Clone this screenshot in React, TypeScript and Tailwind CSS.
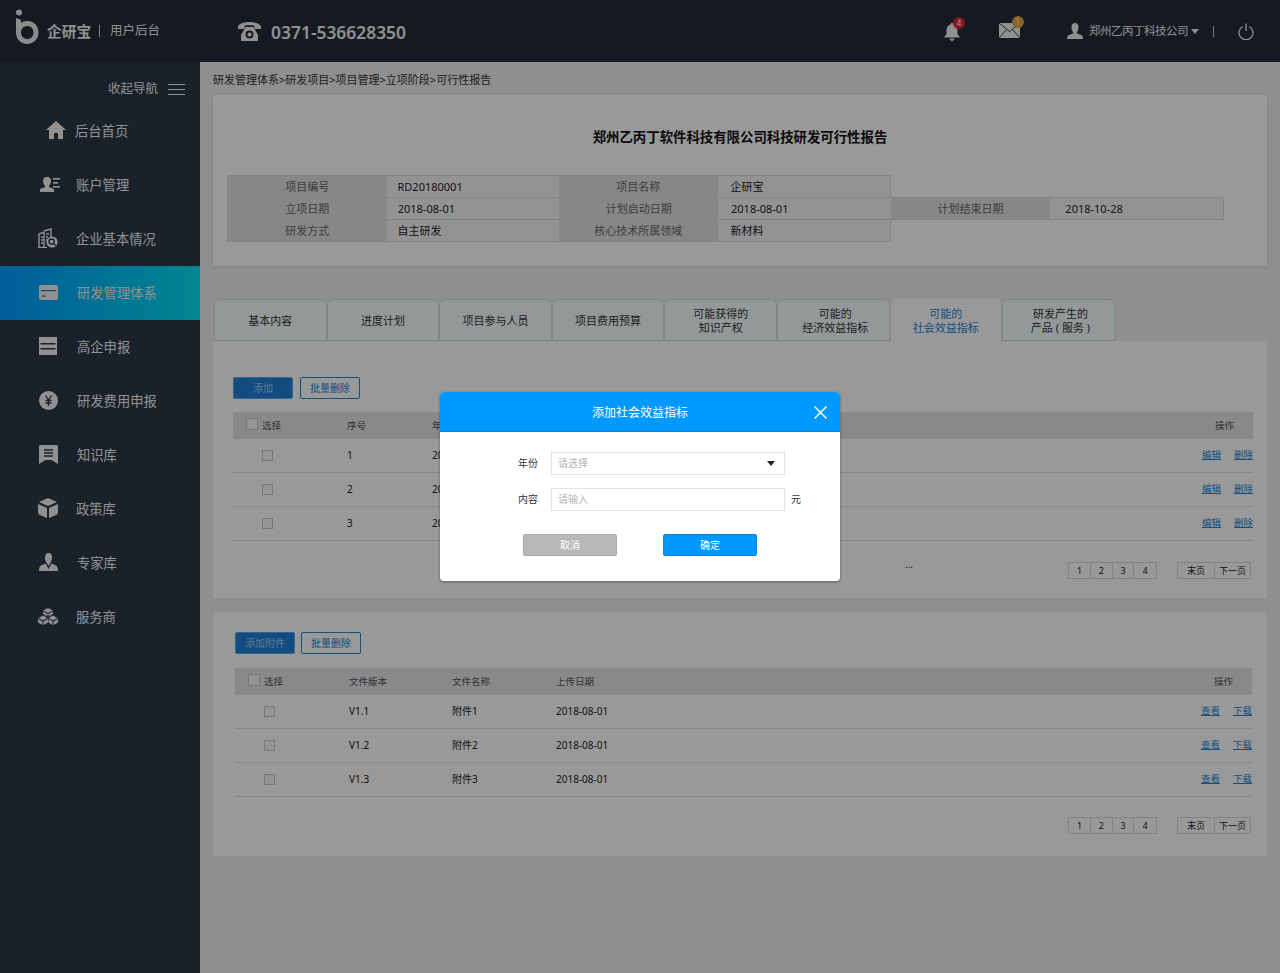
import { ReactNode } from "react";

const menu: { label: string; icon: ReactNode; active?: boolean; pad: string; gap: string }[] = [
  {
    label: "后台首页",
    pad: "pl-[46px]",
    gap: "ml-[9px]",
    icon: (
      <svg width="20" height="18" viewBox="0 0 20 18" fill="#f2f2f2">
        <path d="M10 0 L20 9 L17 9 L17 18 L12 18 L12 12 L8 12 L8 18 L3 18 L3 9 L0 9 Z" />
      </svg>
    ),
  },
  {
    label: "账户管理",
    pad: "pl-[40px]",
    gap: "ml-[16px]",
    icon: (
      <svg width="20" height="15" viewBox="0 0 20 15" fill="#f2f2f2">
        <path d="M7 0 C10 0 11 2 11 4 C11 6 10 8 9 9 L9 10 L14 12 L14 15 L0 15 L0 12 L5 10 L5 9 C4 8 3 6 3 4 C3 2 4 0 7 0 Z" />
        <rect x="13" y="1" width="7" height="1.6" />
        <rect x="13" y="5" width="5" height="1.6" />
        <rect x="13" y="9" width="7" height="1.6" />
      </svg>
    ),
  },
  {
    label: "企业基本情况",
    pad: "pl-[38px]",
    gap: "ml-[18px]",
    icon: (
      <svg width="20" height="20" viewBox="0 0 20 20" fill="none" stroke="#f2f2f2" strokeWidth="1.4">
        <path d="M1 19 L1 6 L6 4 L6 19 M6 3 L13 1 L13 9 M3 9 H5 M3 12 H5 M3 15 H5 M8 6 H11 M8 9 H10 M8 12 H9" />
        <path d="M0 19.5 H9" />
        <circle cx="14" cy="14" r="5.6" fill="#f2f2f2" stroke="none" />
        <circle cx="13.6" cy="13.6" r="2.6" stroke="#2b3849" />
        <path d="M15.6 15.6 L17.6 17.6" stroke="#2b3849" />
      </svg>
    ),
  },
  {
    label: "研发管理体系",
    active: true,
    pad: "pl-[38px]",
    gap: "ml-[19px]",
    icon: (
      <svg width="19" height="15" viewBox="0 0 19 15">
        <rect width="19" height="15" rx="2" fill="#f2f2f2" />
        <rect x="2" y="5" width="15" height="1.2" fill="#1478b8" />
        <rect x="2.500" y="10.500" width="4" height="1.2" fill="#1478b8" />
      </svg>
    ),
  },
  {
    label: "高企申报",
    pad: "pl-[38px]",
    gap: "ml-[19px]",
    icon: (
      <svg width="18" height="18" viewBox="0 0 18 18" fill="#f2f2f2">
        <path
          fillRule="evenodd"
          d="M0 0 H18 V18 H0 Z M1.500 6 V7.500 H16.500 V6 Z M1.500 11 V12.500 H16.500 V11 Z"
        />
      </svg>
    ),
  },
  {
    label: "研发费用申报",
    pad: "pl-[38px]",
    gap: "ml-[19px]",
    icon: (
      <svg width="19" height="19" viewBox="0 0 19 19">
        <circle cx="9.500" cy="9.500" r="9.500" fill="#f2f2f2" />
        <path d="M6.500 4.500 L9.500 9 L12.500 4.500 M9.500 9 V15 M6.500 9.500 H12.500 M6.500 12 H12.500" fill="none" stroke="#2b3849" strokeWidth="1.300" />
      </svg>
    ),
  },
  {
    label: "知识库",
    pad: "pl-[38px]",
    gap: "ml-[19px]",
    icon: (
      <svg width="19" height="19" viewBox="0 0 19 19">
        <path d="M1.500 0 H17.500 Q19 0 19 1.500 V19 L12.500 15 H6.500 L0 19 V1.500 Q0 0 1.500 0 Z" fill="#f2f2f2" />
        <path d="M5 5 H14 M5 8 H14 M5 11 H14" stroke="#2b3849" strokeWidth="1.300" />
      </svg>
    ),
  },
  {
    label: "政策库",
    pad: "pl-[38px]",
    gap: "ml-[18px]",
    icon: (
      <svg width="20" height="20" viewBox="0 0 20 20" fill="#f2f2f2">
        <path d="M10 0 L19 4 L10 8 L1 4 Z" />
        <path d="M0 6 L9 10 L9 20 L3 17.500 Q0 16.500 0 14 Z" />
        <path d="M20 6 L11 10 L11 20 L17 17.500 Q20 16.500 20 14 Z" />
      </svg>
    ),
  },
  {
    label: "专家库",
    pad: "pl-[38px]",
    gap: "ml-[19px]",
    icon: (
      <svg width="19" height="18" viewBox="0 0 19 18" fill="#f2f2f2">
        <path d="M9.500 0 C12 0 13 2 13 4.500 C13 7 12 9 11.500 10 L9.500 13 L7.500 10 C7 9 6 7 6 4.500 C6 2 7 0 9.500 0 Z" />
        <path d="M6.500 10.500 L9.500 16 L12.500 10.500 L17 12.500 Q19 13.500 19 18 H0 Q0 13.500 2 12.500 Z" />
      </svg>
    ),
  },
  {
    label: "服务商",
    pad: "pl-[38px]",
    gap: "ml-[18px]",
    icon: (
      <svg width="20" height="17" viewBox="0 0 20 17" fill="#f2f2f2">
        <path d="M10 0 L15 2.500 L10 5 L5 2.500 Z M5 3.500 L9.500 6 L9.500 8.500 L5 6 Z M15 3.500 L10.500 6 L10.500 8.500 L15 6 Z" />
        <path d="M5 7.500 L9.500 10 L5 12.500 L0.500 10 Z M0 11 L4.500 13.500 L4.500 17 L0 14.500 Z M10 11 L5.500 13.500 L5.500 17 L10 14.500 Z" />
        <path d="M15 7.500 L19.500 10 L15 12.500 L10.500 10 Z M10.500 11 L14.500 13.500 L14.500 17 L10.500 14.500 Z M20 11 L15.500 13.500 L15.500 17 L20 14.500 Z" />
      </svg>
    ),
  },
];

const tabs = [
  { lines: ["基本内容"], shift: "" },
  { lines: ["进度计划"], shift: "" },
  { lines: ["项目参与人员"], shift: "" },
  { lines: ["项目费用预算"], shift: "" },
  { lines: ["可能获得的", "知识产权"], shift: "" },
  { lines: ["可能的", "经济效益指标"], shift: "pl-[4px]" },
  { lines: ["可能的", "社会效益指标"], shift: "" },
  { lines: ["研发产生的", "产品 ( 服务 )"], shift: "pl-[4px]" },
];

function Checkbox({ size }: { size: string }) {
  return <span className={`block border border-[#c8c8c8] bg-[#f8f8f8] ${size}`} />;
}

function Pager() {
  return (
    <div className="flex justify-end pr-px text-[9px] leading-[15px] text-[#222]">
      <div className="flex border border-[#dadada] divide-x divide-[#dadada] bg-white">
        {["1", "2", "3", "4"].map((n) => (
          <span key={n} className="w-[21.7px] text-center">
            {n}
          </span>
        ))}
      </div>
      <div className="ml-5 flex border border-[#dadada] divide-x divide-[#dadada] bg-white">
        <span className="w-[37px] text-center">末页</span>
        <span className="w-[35px] text-center">下一页</span>
      </div>
    </div>
  );
}

function Toolbar({ add, gap }: { add: string; gap: string }) {
  return (
    <div className={`flex text-[10px] ${gap}`}>
      <button className="h-[22px] w-[60px] rounded-[2px] border border-[#5aa9e6] bg-[#1e7fd8] text-[#9fd0f5]">
        {add}
      </button>
      <button className="h-[22px] w-[60px] rounded-[2px] border border-[#2a86c8] bg-white text-[#1e86d8]">
        批量删除
      </button>
    </div>
  );
}

function DataTable({
  cols,
  head,
  rows,
  ops,
}: {
  cols: string;
  head: string[];
  rows: string[][];
  ops: [string, string];
}) {
  return (
    <div className="text-[10px]">
      <div className={`grid h-[27px] items-center bg-[#e4e4e4] pt-px text-[9.500px] text-[#555] ${cols}`}>
        <div className="flex items-center pl-[13px]">
          <Checkbox size="h-3 w-3 mb-[5px]" />
          <span className="ml-[4px]">选择</span>
        </div>
        {head.map((h) => (
          <span key={h}>{h}</span>
        ))}
        <span className="pr-[19px] text-right">操作</span>
      </div>
      {rows.map((r) => (
        <div key={r[0]} className={`grid h-[34px] items-center border-b border-[#e2e2e2] text-[#222] ${cols}`}>
          <div className="pl-[29px]">
            <Checkbox size="h-[11px] w-[11px] mb-px" />
          </div>
          {r.map((c, i) => (
            <span key={i}>{c}</span>
          ))}
          <div className="flex justify-end gap-[13px] text-[9.500px] text-[#1e86d8] underline">
            <span>{ops[0]}</span>
            <span>{ops[1]}</span>
          </div>
        </div>
      ))}
    </div>
  );
}

function InfoCell({
  label,
  value,
  wide,
  pad = "pl-3",
}: {
  label: string;
  value: string;
  wide?: boolean;
  pad?: string;
}) {
  return (
    <>
      <div className={`bg-[#e2e2e2] text-center text-[#666] ${wide ? "w-[160px]" : "w-[159px]"}`}>{label}</div>
      <div className={`w-[173px] bg-[#f6f6f6] text-[#222] ${pad}`}>{value}</div>
    </>
  );
}

export default function App() {
  return (
    <div
      className="relative h-[973px] w-[1280px] overflow-hidden"
      style={{ fontFamily: '"Noto Sans", "Noto Sans CJK SC", sans-serif' }}
    >
      <header className="flex h-[62px] items-center bg-[#232c3a] text-[#f0f0f0]">
        <svg width="24" height="36" viewBox="0 0 24 36" className="ml-[15px] mb-[9px]">
          <circle cx="4" cy="3.500" r="3" fill="#e8e8e8" />
          <path
            fillRule="evenodd"
            d="M1 9 L6 11 L6 14 C8 12.500 10 12 12.500 12 C19 12 23.500 17 23.500 23.500 C23.500 30 18.500 35 12 35 C5.500 35 1 30 1 23.500 Z M12.300 17 C8.700 17 6 19.800 6 23.500 C6 27.200 8.700 30 12.300 30 C15.900 30 18.500 27.200 18.500 23.500 C18.500 19.800 15.900 17 12.300 17 Z"
            fill="#e8e8e8"
          />
        </svg>
        <span className="ml-2 text-[14.700px] font-bold">企研宝</span>
        <span className="ml-2 h-3 w-px bg-[#ddd]" />
        <span className="ml-[10px] text-[12.500px]">用户后台</span>
        <svg width="23" height="19" viewBox="0 0 23 19" fill="#f0f0f0" className="ml-[78px]">
          <path d="M11.500 0 C17 0 21 1.500 23 4 L23 7 L17 7 L16 3.500 C13 3 10 3 7 3.500 L6 7 L0 7 L0 4 C2 1.500 6 0 11.500 0 Z" />
          <path
            fillRule="evenodd"
            d="M7.500 5 H15.500 L20 13 V19 H3 V13 Z M11.500 8.500 A4 4 0 1 0 11.500 16.500 A4 4 0 1 0 11.500 8.500 Z"
          />
          <circle cx="11.500" cy="12.500" r="2" />
        </svg>
        <span className="ml-[10px] pt-[2px] text-[17.400px] font-semibold">0371-536628350</span>

        <div className="relative ml-[538px] h-[17px] w-[16px]">
          <svg width="16" height="18" viewBox="0 0 16 18" fill="#f0f0f0">
            <path d="M8 0 C9 0 9.500 .6 9.500 1.500 C12 2.200 13.500 4.500 13.500 7.500 L13.500 11 L16 14.500 L0 14.500 L2.500 11 L2.500 7.500 C2.500 4.500 4 2.200 6.500 1.500 C6.500 .6 7 0 8 0 Z M5.500 15.500 H10.500 C10 17.300 9 18 8 18 C7 18 6 17.300 5.500 15.500 Z" />
          </svg>
          <span className="absolute left-[9px] top-[-6px] h-[12px] w-[12px] rounded-full bg-[#e0283c] text-center text-[8px] leading-[12px] text-white">
            4
          </span>
        </div>
        <div className="relative ml-[39px] h-[16px] w-[21px]">
          <svg width="21" height="15" viewBox="0 0 21 15" className="block">
            <rect width="21" height="15" fill="#f0f0f0" />
            <path d="M0 0 L10.500 8.500 L21 0 M0 15 L7.500 6.500 M21 15 L13.500 6.500" fill="none" stroke="#232c3a" strokeWidth="0.900" />
          </svg>
          <span className="absolute left-[13px] top-[-7px] h-[12px] w-[12px] rounded-full bg-[#e6a23c] text-center text-[8px] leading-[12px] text-white">
            1
          </span>
        </div>
        <svg width="16" height="16" viewBox="0 0 16 16" fill="#f0f0f0" className="ml-[47px]">
          <path d="M8 0 C10.500 0 11.500 2 11.500 4.500 C11.500 6.500 10.500 8.500 9.800 9.300 L9.800 10.300 L14.500 12.300 Q16 13 16 16 H0 Q0 13 1.500 12.300 L6.200 10.300 L6.200 9.300 C5.500 8.500 4.500 6.500 4.500 4.500 C4.500 2 5.500 0 8 0 Z" />
        </svg>
        <span className="ml-[6px] text-[11.500px] tracking-[-0.5px]">郑州乙丙丁科技公司</span>
        <span className="ml-[3px] h-0 w-0 border-x-[4.5px] border-t-[5px] border-x-transparent border-t-[#f0f0f0]" />
        <span className="ml-[14px] h-[11px] w-px bg-[#ccc]" />
        <svg width="16" height="17" viewBox="0 0 16 17" fill="none" stroke="#f0f0f0" strokeWidth="1.300" className="ml-[24px]">
          <path d="M4.800 3.500 A7 7 0 1 0 11.200 3.500 M8 .5 V8" />
        </svg>
      </header>

      <div className="flex h-[911px]">
        <aside className="w-[200px] shrink-0 bg-[#2b3849] text-[13.300px] text-[#f0f0f0]">
          <div className="flex h-[42px] items-center justify-end pr-[15px] pt-[12px] text-[12.500px]">
            <span>收起导航</span>
            <span className="relative ml-[10px] h-[11px] w-[17px] border-y border-[#f0f0f0]">
              <span className="absolute left-0 top-[4px] h-px w-full bg-[#f0f0f0]" />
            </span>
          </div>
          {menu.map((m) => (
            <div
              key={m.label}
              className={`flex h-[54px] items-center pb-[2px] ${m.pad} ${m.active ? "bg-gradient-to-r from-[#0a9aff] to-[#0ae0f0]" : ""}`}
            >
              <span className="flex w-5 justify-center">{m.icon}</span>
              <span className={`pt-[4px] ${m.gap}`}>{m.label}</span>
            </div>
          ))}
        </aside>

        <main className="min-w-0 flex-1 bg-[#eeeeee] pl-[13px] pr-[13px]">
          <div className="flex h-[33px] items-center pt-[3px] text-[11px] text-[#333]">
            研发管理体系&gt;研发项目&gt;项目管理&gt;立项阶段&gt;可行性报告
          </div>

          <section className="h-[171px] bg-white pl-[14px] shadow-[0_1px_3px_rgba(0,0,0,0.08)]">
            <h1 className="pt-[32px] pr-[14px] text-center text-[13.400px] font-bold leading-[21px] text-[#111]">
              郑州乙丙丁软件科技有限公司科技研发可行性报告
            </h1>
            <div className="mt-[27px] w-[997px] text-[11px] leading-[21px]">
              <div className="flex w-[664px] border border-b-0 border-[#dcdcdc]">
                <InfoCell label="项目编号" value="RD20180001" pad="pl-[11px]" />
                <InfoCell label="项目名称" value="企研宝" pad="pl-[13px]" />
              </div>
              <div className="flex w-[997px] border border-[#dcdcdc]">
                <InfoCell label="立项日期" value="2018-08-01" pad="pl-[11px]" />
                <InfoCell label="计划启动日期" value="2018-08-01" pad="pl-[13px]" />
                <InfoCell label="计划结束日期" value="2018-10-28" wide pad="pl-[15px]" />
              </div>
              <div className="flex w-[664px] border border-t-0 border-[#dcdcdc]">
                <InfoCell label="研发方式" value="自主研发" pad="pl-[11px]" />
                <InfoCell label="核心技术所属领域" value="新材料" pad="pl-[13px]" />
              </div>
            </div>
          </section>

          <div className="mt-[31px] flex h-[44px] items-end pl-px text-[11px] leading-[14px]">
            {tabs.map((t, i) => (
              <div
                key={i}
                className={`flex w-[112.600px] flex-col items-center justify-center rounded-t-[6px] border pt-[2px] ${t.shift} ${
                  i === 6
                    ? "h-[44px] border-b-0 border-[#e4e4e4] bg-white text-[#1e86d8]"
                    : "h-[42px] border-[#d4e2e2] border-b-[#c4d8d8] bg-[#f6ffff] text-[#333]"
                }`}
              >
                {t.lines.map((line) => (
                  <span key={line}>{line}</span>
                ))}
              </div>
            ))}
          </div>

          <section className="h-[257px] bg-white pl-5 pr-[14px] pt-9">
            <Toolbar add="添加" gap="gap-[7px]" />
            <div className="mt-[13px]">
              <DataTable
                cols="grid-cols-[114px_85px_1fr_70px]"
                head={["序号", "年份"]}
                rows={[
                  ["1", "2018"],
                  ["2", "2018"],
                  ["3", "2018"],
                ]}
                ops={["编辑", "删除"]}
              />
            </div>
            <div className="relative mt-[21px] pr-px">
              <span className="absolute left-[672px] top-[-3px] text-[10px] leading-none text-[#333]">...</span>
              <Pager />
            </div>
          </section>

          <section className="mt-[14px] h-[244px] bg-white pl-[22px] pr-[15px] pt-5">
            <Toolbar add="添加附件" gap="gap-[6px]" />
            <div className="mt-[14px]">
              <DataTable
                cols="grid-cols-[114px_103px_104px_1fr_70px]"
                head={["文件版本", "文件名称", "上传日期"]}
                rows={[
                  ["V1.1", "附件1", "2018-08-01"],
                  ["V1.2", "附件2", "2018-08-01"],
                  ["V1.3", "附件3", "2018-08-01"],
                ]}
                ops={["查看", "下载"]}
              />
            </div>
            <div className="mt-[20px]">
              <Pager />
            </div>
          </section>
        </main>
      </div>

      {/* dim layer + dialog */}
      <div className="absolute inset-0 bg-black/40" />
      <div className="absolute left-[440px] top-[392px] h-[189px] w-[400px] overflow-hidden rounded-[4px] bg-white shadow-[0_1px_3px_rgba(0,0,0,0.4)]">
        <div className="relative flex h-[40px] items-center justify-center border-b border-[#0a84d6] bg-[#0099ff] pt-[3px] text-[12px] text-white">
          添加社会效益指标
          <svg width="13" height="13" viewBox="0 0 13 13" stroke="#fff" strokeWidth="1.500" className="absolute right-[13px] top-[14px]">
            <path d="M.5 .5 L12.500 12.500 M12.500 .5 L.5 12.500" />
          </svg>
        </div>
        <div className="pt-5 text-[10px] text-[#333]">
          <div className="flex items-center">
            <span className="w-[98px] text-right">年份</span>
            <div className="ml-[13px] flex h-[23px] w-[234px] items-center justify-between border border-[#e2e2e2] pl-[6px] pr-[9px] text-[#b4b4b4]">
              请选择
              <span className="h-0 w-0 border-x-[4px] border-t-[5px] border-x-transparent border-t-[#222]" />
            </div>
          </div>
          <div className="mt-[13px] flex items-center">
            <span className="w-[98px] text-right">内容</span>
            <div className="ml-[13px] flex h-[23px] w-[234px] items-center border border-[#e2e2e2] pl-[6px] text-[#b4b4b4]">
              请输入
            </div>
            <span className="ml-[6px]">元</span>
          </div>
          <div className="mt-[23px] flex gap-[46px] pl-[83px]">
            <button className="h-[22px] w-[94px] rounded-[2px] border border-[#aaa] bg-[#b8b8b8] text-white">取消</button>
            <button className="h-[22px] w-[94px] rounded-[2px] border border-[#0a84d6] bg-[#0099ff] text-white">确定</button>
          </div>
        </div>
      </div>
    </div>
  );
}
